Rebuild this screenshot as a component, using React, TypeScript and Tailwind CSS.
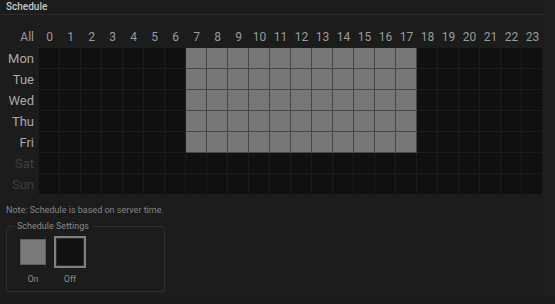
import React from "react";

const days = ["Mon", "Tue", "Wed", "Thu", "Fri", "Sat", "Sun"];
const hours = Array.from({ length: 24 }, (_, i) => i);

function isOn(d: number, h: number) {
  return d < 5 && h >= 7 && h <= 17;
}

export default function App() {
  return (
    <div
      className="w-[555px] h-[304px] bg-[#1a1a1a] flex overflow-hidden"
      style={{ fontFamily: "Roboto, 'Liberation Sans', sans-serif" }}
    >
      <div className="flex-1 h-[296px] bg-[#1c1c1c] flex flex-col">
        <div className="h-[15px] border-b border-[#2b2b2b] px-[6px] text-[10px] leading-[14px] font-medium text-[#c4c4c4]">
          Schedule
        </div>
        <div className="mt-[12px] grid grid-cols-[39px_repeat(24,21px)]">
          <div className="h-[21px] pr-[5px] text-right text-[12px] leading-[21px] text-[#9a9a9a]">All</div>
          {hours.map((h) => (
            <div key={h} className="h-[21px] text-center text-[12px] leading-[21px] text-[#9a9a9a]">
              {h}
            </div>
          ))}
          {days.map((d, di) => (
            <React.Fragment key={d}>
              <div
                className={
                  di < 5
                    ? "h-[21px] pr-[5px] text-right text-[13px] leading-[21px] text-[#a8a8a8]"
                    : "h-[21px] pr-[5px] text-right text-[13px] leading-[21px] text-[#3e3e3e]"
                }
              >
                {d}
              </div>
              {hours.map((h) => (
                <div
                  key={h}
                  className={
                    isOn(di, h)
                      ? "h-[21px] border-r border-b border-[#474747] bg-[#777777]"
                      : "h-[21px] border-r border-b border-[#1b1b1b] bg-[#101010]"
                  }
                />
              ))}
            </React.Fragment>
          ))}
        </div>
        <div className="mt-[9px] px-[6px] text-[9px] leading-[12px] text-[#858585]">
          Note: Schedule is based on server time.
        </div>
        <fieldset className="mt-[5px] ml-[6px] w-[159px] h-[71px] border border-[#2e2e2e] rounded-[3px] px-[13px]">
          <legend className="ml-[-6px] px-[3px] text-[9px] leading-[11px] text-[#8a8a8a]">Schedule Settings</legend>
          <div className="flex gap-[8px] mt-[4px]">
            <div className="flex flex-col items-center">
              <div className="h-[32px] flex items-center">
                <div className="w-[26px] h-[26px] bg-[#7a7a7a] border border-[#5e5e5e]" />
              </div>
              <div className="mt-[5px] text-[9px] leading-[12px] text-[#8a8a8a]">On</div>
            </div>
            <div className="flex flex-col items-center">
              <div className="w-[32px] h-[32px] border-2 border-[#808080] bg-[#111111]">
                <div className="w-full h-full border border-[#2c2c2c]" />
              </div>
              <div className="mt-[5px] text-[9px] leading-[12px] text-[#8a8a8a]">Off</div>
            </div>
          </div>
        </fieldset>
      </div>
      <div className="w-[10px] h-[296px] bg-[#1e1e1e]" />
    </div>
  );
}
